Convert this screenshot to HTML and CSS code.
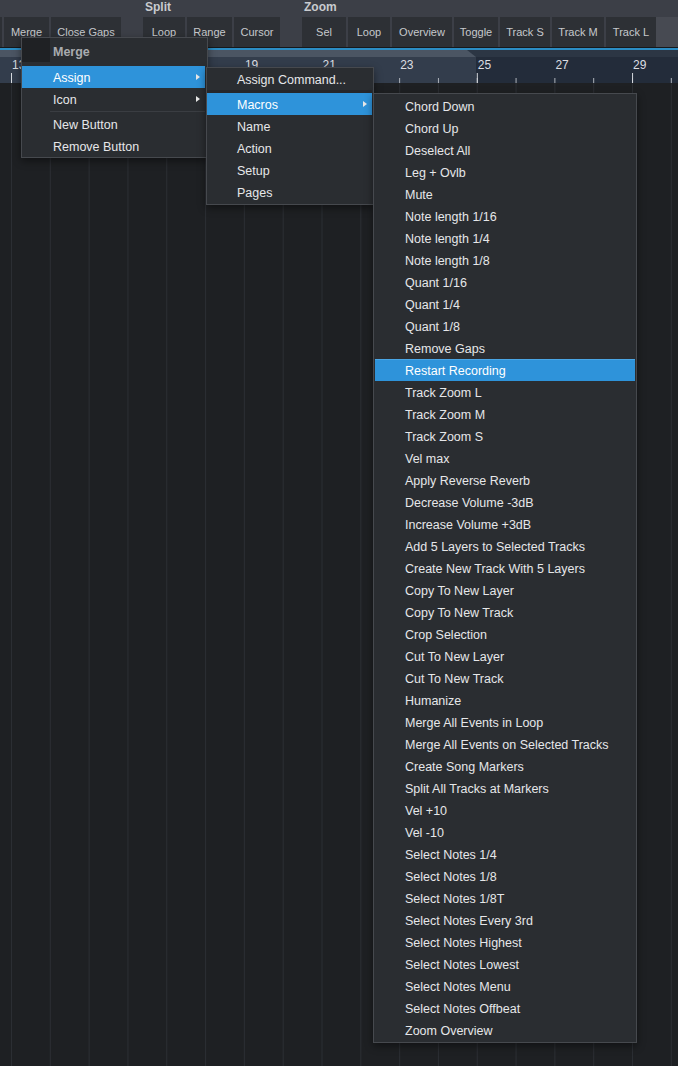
FILE: index.html
```html
<!DOCTYPE html>
<html>
<head>
<meta charset="utf-8">
<link rel="stylesheet" href="styles.css">
</head>
<body>
<div class="app">
  <header class="toolbar">
    <div class="group g1">
      <div class="glabel"></div>
      <div class="btns"><div class="btn"></div><div class="btn">Merge</div><div class="btn">Close Gaps</div></div>
    </div>
    <div class="group g2">
      <div class="glabel">Split</div>
      <div class="btns"><div class="btn">Loop</div><div class="btn">Range</div><div class="btn">Cursor</div></div>
    </div>
    <div class="group g3">
      <div class="glabel">Zoom</div>
      <div class="btns"><div class="btn">Sel</div><div class="btn">Loop</div><div class="btn">Overview</div><div class="btn">Toggle</div><div class="btn">Track S</div><div class="btn">Track M</div><div class="btn">Track L</div></div>
    </div>
    <div class="group g4">
      <div class="glabel"></div>
      <div class="btns"><div class="fill"></div></div>
    </div>
  </header>

  <div class="timeline">
    <div class="edge"></div>
    <div class="band"><div class="band-loop"></div><div class="band-rest"></div></div>
    <div class="ruler">
      <span>13</span><span>15</span><span>17</span><span>19</span><span>21</span><span>23</span><span>25</span><span>27</span><span>29</span>
    </div>
  </div>

  <main class="tracks"></main>

  <div class="menu m1">
    <div class="mhead">Merge</div>
    <div class="item sub active">Assign</div>
    <div class="item sub">Icon</div>
    <div class="sep"></div>
    <div class="item">New Button</div>
    <div class="item">Remove Button</div>
  </div>

  <div class="menu m2">
    <div class="item">Assign Command...</div>
    <div class="sep"></div>
    <div class="item sub active">Macros</div>
    <div class="item">Name</div>
    <div class="item">Action</div>
    <div class="item">Setup</div>
    <div class="item">Pages</div>
  </div>

  <div class="menu m3">
    <div class="item">Chord Down</div>
    <div class="item">Chord Up</div>
    <div class="item">Deselect All</div>
    <div class="item">Leg + Ovlb</div>
    <div class="item">Mute</div>
    <div class="item">Note length 1/16</div>
    <div class="item">Note length 1/4</div>
    <div class="item">Note length 1/8</div>
    <div class="item">Quant 1/16</div>
    <div class="item">Quant 1/4</div>
    <div class="item">Quant 1/8</div>
    <div class="item">Remove Gaps</div>
    <div class="item active">Restart Recording</div>
    <div class="item">Track Zoom L</div>
    <div class="item">Track Zoom M</div>
    <div class="item">Track Zoom S</div>
    <div class="item">Vel max</div>
    <div class="item">Apply Reverse Reverb</div>
    <div class="item">Decrease Volume -3dB</div>
    <div class="item">Increase Volume +3dB</div>
    <div class="item">Add 5 Layers to Selected Tracks</div>
    <div class="item">Create New Track With 5 Layers</div>
    <div class="item">Copy To New Layer</div>
    <div class="item">Copy To New Track</div>
    <div class="item">Crop Selection</div>
    <div class="item">Cut To New Layer</div>
    <div class="item">Cut To New Track</div>
    <div class="item">Humanize</div>
    <div class="item">Merge All Events in Loop</div>
    <div class="item">Merge All Events on Selected Tracks</div>
    <div class="item">Create Song Markers</div>
    <div class="item">Split All Tracks at Markers</div>
    <div class="item">Vel +10</div>
    <div class="item">Vel -10</div>
    <div class="item">Select Notes 1/4</div>
    <div class="item">Select Notes 1/8</div>
    <div class="item">Select Notes 1/8T</div>
    <div class="item">Select Notes Every 3rd</div>
    <div class="item">Select Notes Highest</div>
    <div class="item">Select Notes Lowest</div>
    <div class="item">Select Notes Menu</div>
    <div class="item">Select Notes Offbeat</div>
    <div class="item">Zoom Overview</div>
  </div>
</div>
</body>
</html>
```

FILE: styles.css
```css
* { box-sizing: border-box; }

html, body {
  margin: 0;
  padding: 0;
  background: #1e2023;
}

.app {
  position: relative;
  width: 678px;
  height: 1066px;
  overflow: hidden;
  display: flex;
  flex-direction: column;
  font-family: "Liberation Sans", Arial, Helvetica, sans-serif;
  background: #1e2023;
}

/* ---------- toolbar ---------- */
.toolbar {
  display: flex;
  height: 47px;
  flex: none;
  background: #3c3f47;
}

.group {
  display: flex;
  flex-direction: column;
}

.glabel {
  height: 17px;
  line-height: 15px;
  padding-left: 2px;
  font-size: 12px;
  font-weight: bold;
  color: #c9cbcf;
  white-space: nowrap;
}

.btns {
  display: grid;
  gap: 2px;
  height: 30px;
}

.g1 .btns { grid-template-columns: 2px 45px 70px; }
.g2 { margin-left: 22px; }
.g2 .btns { grid-template-columns: 42px 45px 46px; }
.g3 { margin-left: 22px; }
.g3 .btns { grid-template-columns: 44px 42px 60px 44px 50px 52px 50px; }
.g4 { flex: 1; }
.g4 .btns { grid-template-columns: 1fr; }

.btn {
  background: #2d3035;
  color: #c6c8cc;
  font-size: 11px;
  line-height: 30px;
  text-align: center;
  white-space: nowrap;
  overflow: hidden;
}

.fill {
  background: #474a52;
}

/* ---------- timeline ruler ---------- */
.timeline {
  flex: none;
  display: flex;
  flex-direction: column;
}

.edge {
  height: 3px;
  border-top: 1px solid #16181b;
  background: #2b8dc4;
}

.band {
  display: flex;
  height: 7px;
  background: #2c3644;
}

.band-loop {
  width: 476px;
  flex: none;
  background: #4b5563;
  clip-path: polygon(0 0, 467px 0, 476px 100%, 0 100%);
}

.band-rest { flex: 1; }

.ruler {
  display: flex;
  height: 26px;
  padding: 1px 0 0 12px;
  font-size: 12px;
  line-height: 14px;
  color: #dcdee2;
  background:
    linear-gradient(to right, #d6d9de 1px, transparent 1px) 11px 100% / 155.28px 10px repeat-x,
    linear-gradient(to right, #aeb3ba 1px, transparent 1px) 11px 100% / 38.82px 5px repeat-x,
    linear-gradient(to right, #333d4c 0, #333d4c 476px, #232c3a 476px);
}

.ruler span {
  flex: none;
  width: 77.64px;
}

/* ---------- track area ---------- */
.tracks {
  flex: 1;
  background:
    linear-gradient(to right, #2b2e33 1px, transparent 1px) 11px 0 / 38.82px 100% repeat-x,
    #1e2023;
}

/* ---------- context menus ---------- */
.menu {
  position: absolute;
  background: #2a2d31;
  border: 1px solid #46494e;
  box-shadow: 0 3px 8px rgba(0, 0, 0, 0.45);
  font-size: 12.5px;
  color: #e6e7e9;
}

.item {
  height: 22px;
  padding-top: 1px;
  line-height: 22px;
  white-space: nowrap;
  position: relative;
}

.item.active {
  background: #2e93da;
  color: #ffffff;
}

.item.sub::after {
  content: "";
  position: absolute;
  top: 8px;
  right: 5px;
  border-left: 4px solid #e8e8e8;
  border-top: 3px solid transparent;
  border-bottom: 3px solid transparent;
}

.sep {
  height: 3px;
  border-top: 1px solid transparent;
  border-bottom: 1px solid transparent;
  background: #3a3d42;
  background-clip: content-box;
}

.mhead {
  height: 28px;
  line-height: 28px;
  padding-left: 31px;
  font-weight: bold;
  color: #a9abaf;
  background: linear-gradient(#1f2124, #1f2124) 0 0 / 28px 24px no-repeat;
}

.m1 {
  left: 21px;
  top: 37px;
  width: 187px;
  height: 121px;
  z-index: 1;
}
.m1 .item { padding-left: 31px; margin-right: 2px; }
.m1 .sep { margin: 0 2px 0 28px; }

.m2 {
  left: 206px;
  top: 67px;
  width: 168px;
  height: 138px;
  z-index: 2;
}
.m2 .item { padding-left: 30px; margin-right: 1px; }
.m2 .sep { margin: 0 1px 0 0; background: #25272b; }

.m3 {
  left: 373px;
  top: 93px;
  width: 264px;
  height: 950px;
  padding: 1px;
  z-index: 3;
}
.m3 .item { padding-left: 30px; }
.m3 .item.active { box-shadow: inset 0 1px 0 #4aa6e6; }
```
